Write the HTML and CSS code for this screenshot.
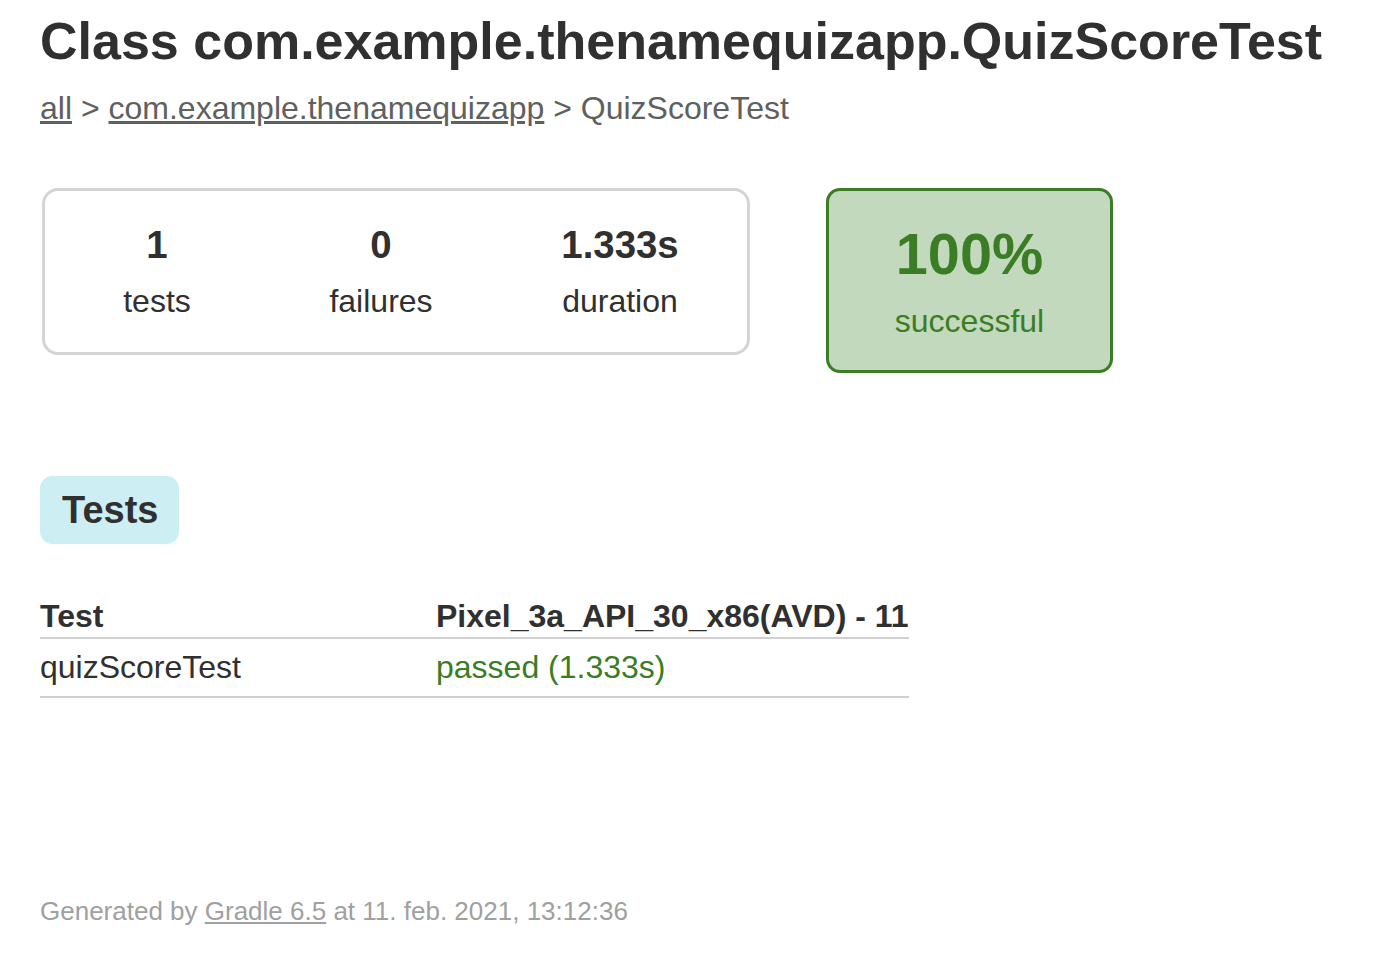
FILE: index.html
```html
<!DOCTYPE html>
<html>
<head>
<meta charset="utf-8">
<title>Test results - Class com.example.thenamequizapp.QuizScoreTest</title>
<link rel="stylesheet" href="styles.css">
</head>
<body>
<div class="content">
  <h1 class="title">Class com.example.thenamequizapp.QuizScoreTest</h1>
  <div class="breadcrumbs"><a href="#">all</a> &gt; <a href="#">com.example.thenamequizapp</a> &gt; QuizScoreTest</div>

  <div class="summary">
    <div class="summary-group">
      <div class="cell">
        <div class="info-box">
          <div class="counter">1</div>
          <p>tests</p>
        </div>
      </div>
      <div class="cell">
        <div class="info-box">
          <div class="counter">0</div>
          <p>failures</p>
        </div>
      </div>
      <div class="cell">
        <div class="info-box info-duration">
          <div class="counter">1.333s</div>
          <p>duration</p>
        </div>
      </div>
    </div>
    <div class="success-rate">
      <div class="percent">100%</div>
      <p>successful</p>
    </div>
  </div>

  <ul class="tab-links">
    <li class="selected"><h2>Tests</h2></li>
  </ul>

  <table class="tests-table">
    <thead>
      <tr><th>Test</th><th>Pixel_3a_API_30_x86(AVD) - 11</th></tr>
    </thead>
    <tbody>
      <tr><td>quizScoreTest</td><td class="success">passed (1.333s)</td></tr>
    </tbody>
  </table>

  <div class="footer">Generated by <a href="#">Gradle 6.5</a> at 11. feb. 2021, 13:12:36</div>
</div>
</body>
</html>
```

FILE: styles.css
```css
html, body {
  margin: 0;
  padding: 0;
  background: #ffffff;
}

body {
  font-family: "Liberation Sans", Arial, Helvetica, sans-serif;
  font-size: 32px;
  color: #303030;
}

a, a:visited {
  color: #303030;
}

.content {
  padding: 11px 40px 30px 40px;
}

.title {
  font-size: 52px;
  font-weight: bold;
  margin: 0 0 19px 0;
  white-space: nowrap;
  color: #303030;
}

.breadcrumbs,
.breadcrumbs a {
  color: #606060;
}

.summary {
  display: flex;
  align-items: flex-start;
  margin-top: 61px;
  margin-left: 2px;
}

.summary-group {
  display: flex;
  border: solid 3px #d4d4d4;
  border-radius: 16px;
}

.summary-group .cell {
  padding: 2px;
}

.info-box {
  width: 220px;
  padding: 30px 0;
  text-align: center;
}

.info-box.info-duration {
  width: 250px;
}

.info-box p,
.success-rate p {
  margin: 0;
}

.counter {
  font-size: 38.4px;
  font-weight: bold;
  margin-bottom: 16px;
}

.success-rate {
  width: 281px;
  margin-left: 76px;
  padding: 30px 0;
  text-align: center;
  border: solid 3px #3a7d24;
  border-radius: 14px;
  background-color: #c2d9bd;
  color: #3a7d24;
}

.percent {
  font-size: 57.6px;
  font-weight: bold;
  margin-bottom: 16px;
}

.tab-links {
  list-style: none;
  margin: 103px 0 0 0;
  padding: 0;
  display: flex;
}

.tab-links li {
  padding: 11px 20px 11px 21px;
  border: solid 1px #cdeef3;
  border-radius: 12px;
  background-color: #cdeef3;
}

.tab-links h2 {
  margin: 0;
  padding: 0;
  font-size: 38px;
  line-height: 44px;
  font-weight: bold;
}

.tests-table {
  border-collapse: collapse;
  margin-top: 52px;
  border-bottom: solid 2px #d0d0d0;
}

.tests-table th {
  text-align: left;
  white-space: nowrap;
  font-weight: bold;
  padding: 2px 0 2px 195px;
  border-bottom: solid 2px #d0d0d0;
}

.tests-table th:first-child,
.tests-table td:first-child {
  padding-left: 0;
}

.tests-table td {
  white-space: nowrap;
  padding: 10px 0 10px 195px;
}

.success {
  color: #3a7d24;
}

.footer {
  margin-top: 198px;
  font-size: 26px;
  white-space: nowrap;
  color: #a0a0a0;
}

.footer a {
  color: #a0a0a0;
}
```
